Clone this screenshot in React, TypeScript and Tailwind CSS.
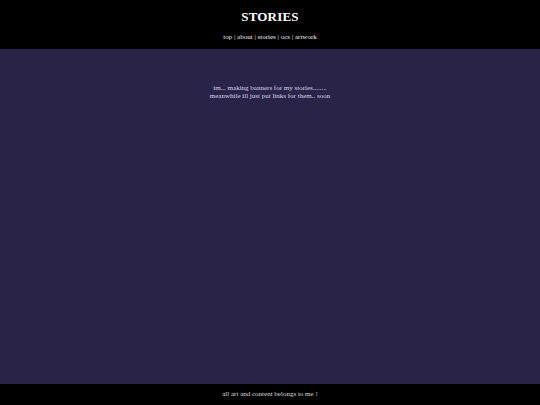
import React from 'react';

function App() {
  return (
    <div
      className="min-h-screen flex flex-col bg-[#2a2348] text-white"
      style={{ fontFamily: '"Liberation Serif", "Times New Roman", serif' }}
    >
      {/* Header */}
      <header className="bg-black h-[49px] flex flex-col items-center pt-[9px]">
        <h1 className="text-[13px] font-bold leading-[16px] tracking-[0.2px]">STORIES</h1>
        <nav className="text-[7px] leading-[8px] mt-[8px] text-[#eeeeee]">
          top | about | stories | ocs | artwork
        </nav>
      </header>

      {/* Main */}
      <main className="flex-1 flex flex-col items-center pt-[35px] text-[#ddd6ee] text-[7px] leading-[8px] text-center">
        <p>im... making banners for my stories........</p>
        <p>meanwhile ill just put links for them.. soon</p>
      </main>

      {/* Footer */}
      <footer className="bg-black h-[21px] flex items-center justify-center text-[7px] text-[#dddddd]">
        all art and content belongs to me !
      </footer>
    </div>
  );
}

export default App;
